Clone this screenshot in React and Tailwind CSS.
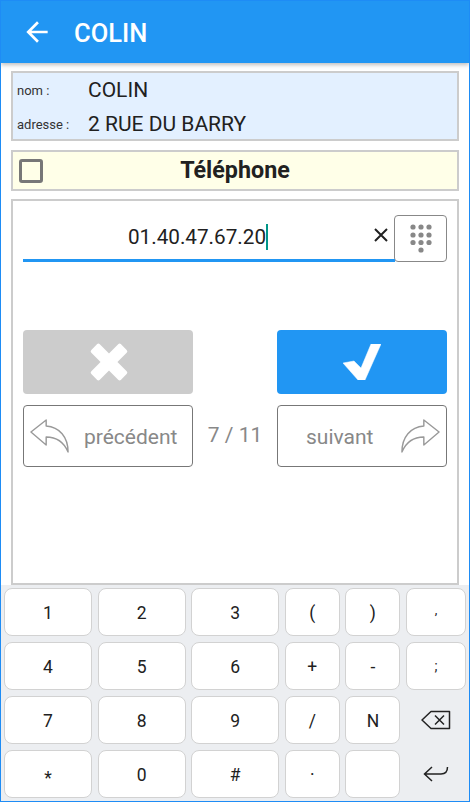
const KEY_ROWS = [
  ["1", "2", "3", "(", ")", ","],
  ["4", "5", "6", "+", "-", ";"],
  ["7", "8", "9", "/", "N", "backspace"],
  ["*", "0", "#", "·", " ", "enter"],
]

// ponctuation plus petite sur le clavier d'origine
const KEY_STYLES = {
  ",": "text-[13px] pb-[4px]",
  ";": "text-[14px]",
  "*": "text-[17.5px] pt-[8px]",
}

function Key({ label }) {
  if (label === "backspace") {
    return (
      <div className="flex items-center justify-center h-[48px]">
        <svg width="30" height="20" viewBox="0 0 30 20" fill="none" stroke="#222" strokeWidth="1.5">
          <path d="M1 10 L10 1.5 H28.5 V18.5 H10 Z" strokeLinejoin="round" />
          <path d="M14 5.5 L23 14.5 M23 5.5 L14 14.5" />
        </svg>
      </div>
    )
  }
  if (label === "enter") {
    return (
      <div className="flex items-center justify-center h-[48px]">
        <svg width="26" height="16" viewBox="0 0 26 16" fill="none" stroke="#222" strokeWidth="1.5">
          <path d="M9 1 L1.5 8 L9 15 M1.5 8 H18 C22 8 24.5 6 24.5 1" />
        </svg>
      </div>
    )
  }
  return (
    <div className={`flex items-center justify-center h-[48px] bg-white rounded-lg border-[1.5px] border-[#d2d2d2] text-[#212121] ${KEY_STYLES[label] || "text-[17.5px] pt-[3px]"}`}>
      {label}
    </div>
  )
}

export default function App() {
  return (
    <div className="w-[470px] h-[802px] overflow-hidden flex flex-col border border-[#1e8cf5] bg-white font-['Roboto',sans-serif]">
      {/* Header */}
      <div className="relative z-10 flex items-center h-[62px] shrink-0 bg-[#2196f3] shadow-[0_2px_4px_rgba(0,0,0,0.25)] pl-[20px]">
        <svg width="32" height="32" viewBox="0 0 24 24" fill="#fff">
          <path d="M20 11H7.83l5.59-5.59L12 4l-8 8 8 8 1.41-1.41L7.83 13H20v-2z" />
        </svg>
        <span className="ml-[21px] pt-[3px] text-[25.5px] font-medium text-white">COLIN</span>
      </div>

      {/* Client */}
      <div className="mx-[10px] mt-[8px] h-[70px] shrink-0 flex flex-col justify-center gap-[6px] bg-[#e3f0ff] border-2 border-[#cccccc] pl-[4px] pt-[3px] text-[#212121]">
        <div className="flex items-center h-[28px]">
          <span className="w-[71px] text-[13px] text-[#333]">nom :</span>
          <span className="text-[21px]">COLIN</span>
        </div>
        <div className="flex items-center h-[28px]">
          <span className="w-[71px] text-[13px] text-[#333]">adresse :</span>
          <span className="text-[21px]">2 RUE DU BARRY</span>
        </div>
      </div>

      {/* Title */}
      <div className="relative mx-[10px] mt-[9px] h-[41px] shrink-0 flex items-center justify-center bg-[#ffffe8] border-2 border-[#cccccc]">
        <div className="absolute left-[6px] top-[7px] w-[24px] h-[24px] rounded-[3px] border-[3px] border-[#777]" />
        <span className="text-[23.3px] font-bold text-[#212121]">Téléphone</span>
      </div>

      {/* Form */}
      <div className="flex-1 mx-[10px] mt-[8px] border-2 border-[#cccccc] px-[10px] pt-[14px]">
        <div className="flex items-end h-[47px]">
          <div className="relative flex-1 h-[47px] flex items-center border-b-[3px] border-[#2196f3] pr-[22px]">
            <div className="flex-1 flex justify-center">
              <span className="text-[20.7px] text-[#212121] border-r-2 border-[#009688] h-[26px] leading-[26px]">01.40.47.67.20</span>
            </div>
            <svg width="24" height="24" viewBox="0 0 24 24" fill="none" stroke="#212121" strokeWidth="2" className="absolute right-[2px] top-[8px]">
              <path d="M6 6 L18 18 M18 6 L6 18" />
            </svg>
          </div>
          <div className="w-[53px] h-[47px] flex items-center justify-center rounded-[4px] border border-[#888] bg-white ml-[-1px]">
            <svg width="24" height="32" viewBox="0 0 24 32" fill="#888">
              <circle cx="4" cy="4" r="2.6" />
              <circle cx="12" cy="4" r="2.6" />
              <circle cx="20" cy="4" r="2.6" />
              <circle cx="4" cy="12" r="2.6" />
              <circle cx="12" cy="12" r="2.6" />
              <circle cx="20" cy="12" r="2.6" />
              <circle cx="4" cy="19.5" r="2.6" />
              <circle cx="12" cy="19.5" r="2.6" />
              <circle cx="20" cy="19.5" r="2.6" />
              <circle cx="12" cy="27" r="2.6" />
            </svg>
          </div>
        </div>

        <div className="flex justify-between mt-[68px]">
          <div className="w-[170px] h-[64px] flex items-center justify-center rounded-[4px] bg-[#cccccc]">
            <svg width="40" height="40" viewBox="0 0 40 40" fill="#fff" className="ml-[1px]">
              <rect x="-1" y="14" width="42" height="12" rx="2" transform="rotate(45 20 20)" />
              <rect x="-1" y="14" width="42" height="12" rx="2" transform="rotate(-45 20 20)" />
            </svg>
          </div>
          <div className="w-[170px] h-[64px] flex items-center justify-center rounded-[4px] bg-[#2196f3]">
            <svg width="38" height="36" viewBox="0 0 38 36" fill="#fff">
              <path d="M0 19 L11 17 L18 24 L28 0 L38 0 L22 36 L15 36 Z" stroke="#fff" strokeWidth="0.5" strokeLinejoin="round" />
            </svg>
          </div>
        </div>

        <div className="flex justify-between items-center mt-[11px]">
          <div className="w-[170px] h-[62px] flex items-center rounded-[4px] border border-[#777] pl-[6px] text-[21px] text-[#888]">
            <svg width="39" height="34" viewBox="0 0 41 34" preserveAspectRatio="none" fill="none" stroke="#999" strokeWidth="1.5">
              <path d="M1 13 L17 1 V7 C31 8 40 18 40 33 C36 24 29 18 17 18 V26 Z" strokeLinejoin="round" />
            </svg>
            <span className="ml-[15px] pt-[3px]">précédent</span>
          </div>
          <span className="text-[21px] text-[#888]">7 / 11</span>
          <div className="w-[170px] h-[62px] flex items-center justify-between rounded-[4px] border border-[#777] pl-[28px] pr-[6px] text-[21px] text-[#888]">
            <span className="pt-[3px]">suivant</span>
            <svg width="39" height="34" viewBox="0 0 41 34" preserveAspectRatio="none" fill="none" stroke="#999" strokeWidth="1.5">
              <path d="M40 13 L24 1 V7 C10 8 1 18 1 33 C5 24 12 18 24 18 V26 Z" strokeLinejoin="round" />
            </svg>
          </div>
        </div>
      </div>

      {/* Keyboard */}
      <div className="h-[216px] shrink-0 bg-[#eceef1] pl-[3px] pt-[3px] flex flex-col gap-[6px]">
        {KEY_ROWS.map((row, i) => (
          <div key={i} className="grid grid-cols-[88px_88px_88px_55px_55px_60px] gap-x-[5.6px]">
            {row.map((label, j) => (
              <Key key={j} label={label} />
            ))}
          </div>
        ))}
      </div>
    </div>
  )
}
